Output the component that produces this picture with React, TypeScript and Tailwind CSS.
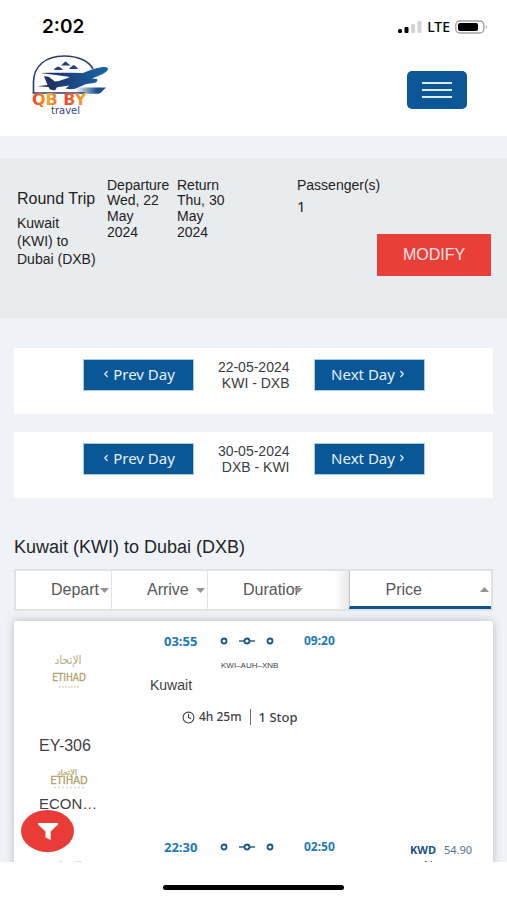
import { ChevronLeft, ChevronRight, Clock } from 'lucide-react'

type LegInfo = {
  id: string
  depart: string
  arrive: string
  price?: string
}

const SHIFTS = [
  { date: '22-05-2024', route: 'KWI - DXB' },
  { date: '30-05-2024', route: 'DXB - KWI' },
]

const LEGS: LegInfo[] = [
  { id: 'out', depart: '03:55', arrive: '09:20' },
  { id: 'back', depart: '22:30', arrive: '02:50', price: '54.90' },
]

function StatusBar() {
  return (
    <div className="flex h-[46px] shrink-0 items-center justify-between pt-2 pr-[19px] pl-[42px]">
      <span className="font-['Inter'] text-[19px] leading-6 font-semibold text-black">2:02</span>
      <div className="flex items-center gap-[5px]">
        <svg width="24" height="14" viewBox="0 0 24 14" aria-hidden="true">
          <rect x="0" y="9" width="4" height="4" rx="1.5" fill="#000" />
          <rect x="6.5" y="7" width="4" height="6" rx="1" fill="#000" />
          <rect x="13" y="4" width="4" height="9" rx="1" fill="#d4d4d4" />
          <rect x="19.5" y="1" width="4" height="12" rx="1" fill="#d4d4d4" />
        </svg>
        <span className="font-['Noto_Sans'] text-sm leading-5 font-medium text-black">LTE</span>
        <svg width="33" height="14" viewBox="0 0 33 14" aria-hidden="true">
          <rect x="0.8" y="1" width="28" height="12" rx="4" fill="#fff" stroke="#a3a3a3" strokeWidth="1.4" />
          <rect x="3" y="3" width="20" height="8" rx="2" fill="#000" />
          <path d="M30.8 5.2c1.6.5 1.6 3.1 0 3.6z" fill="#a3a3a3" />
        </svg>
      </div>
    </div>
  )
}

function BrandLogo() {
  return (
    <svg width="78" height="64" viewBox="0 0 78 64" role="img" aria-label="QB BY travel">
      <defs>
        <linearGradient id="fire" x1="0" y1="0" x2="1" y2="0">
          <stop offset="0" stopColor="#e0452f" />
          <stop offset="0.3" stopColor="#f3a82c" />
          <stop offset="0.6" stopColor="#e2463a" />
          <stop offset="1" stopColor="#f5b32a" />
        </linearGradient>
        <linearGradient id="runway" x1="0" y1="0" x2="1" y2="0">
          <stop offset="0" stopColor="#1c5089" stopOpacity="0" />
          <stop offset="0.7" stopColor="#1c5089" />
        </linearGradient>
        <linearGradient id="plane" x1="0" y1="0" x2="1" y2="0">
          <stop offset="0" stopColor="#23265c" />
          <stop offset="1" stopColor="#1668a8" />
        </linearGradient>
      </defs>
      <path d="M2.500 40V29C2.500 13 15 3 33 3c14 0 25 5 29 13" fill="none" stroke="#2c3b72" strokeWidth="1.6" />
      <path d="M1.700 40H54" stroke="#2c3b72" strokeWidth="1.6" />
      <path d="M46 34.500h29l-5 5-2 1.300H44z" fill="url(#runway)" />
      <path d="M23 17c.5-2 2-2.500 4-3.500 1.800.5 3.500 1.500 5 3.500zM30 12.500c1-1 2.500-2.500 4.500-4 2 1.500 3.500 3 5.500 4zM38 16c1-1.500 2.500-2.500 4.500-4 2 1 3.500 2.500 5 4z" fill="#233e7c" />
      <path
        d="M13 23l5 1 6 4.500c5-.4 10-2.500 15-4.500-9-1.500-19-2.500-30-4 14-.6 29-.3 43 0 6-2.500 11-4.200 17-5.500 4.500-1 8-.4 8 1.200 0 2.500-5 5.300-11 7.800l-5 2 5 .6c1 2-.6 3.800-3 4L55 31l-9 4c-3.500 1.600-8 1.400-11.500.4l4-3-12.500 1.800-2 3.200-5-.8-1.500-2.600-11-.8 10-1.200z"
        fill="url(#plane)"
      />
      <text x="1" y="52" fill="url(#fire)" fontFamily="DejaVu Sans" fontSize="16" fontWeight="700">QB BY</text>
      <text x="20" y="61" fontFamily="DejaVu Sans" fontSize="10" fill="#34487e">travel</text>
    </svg>
  )
}

function EtihadTall() {
  return (
    <svg width="36" height="36" viewBox="0 0 36 36" role="img" aria-label="Etihad Airways">
      <text x="17" y="11" textAnchor="middle" fontFamily="DejaVu Sans Condensed" fontSize="12" fill="#b9ad7c">الإتحاد</text>
      <text x="18" y="28" textAnchor="middle" fontFamily="DejaVu Sans Condensed" fontSize="10" fill="#b0a36c" stroke="#b0a36c" strokeWidth="0.3">ETIHAD</text>
      <path d="M8 34h20" stroke="#ddd8c6" strokeWidth="2" strokeDasharray="1.500 1.500" />
    </svg>
  )
}

function EtihadWide() {
  return (
    <svg width="50" height="20" viewBox="0 0 50 20" role="img" aria-label="Etihad Airways">
      <text x="23" y="6" textAnchor="middle" fontFamily="DejaVu Sans" fontSize="8" fill="#b9ad7c" stroke="#b9ad7c" strokeWidth="0.3">الإتحاد</text>
      <text x="25" y="15" textAnchor="middle" fontFamily="DejaVu Sans" fontSize="10" fill="#b0a36c" stroke="#b0a36c" strokeWidth="0.3">ETIHAD</text>
      <path d="M10 18.500h30" stroke="#ddd8c6" strokeWidth="1.500" strokeDasharray="2 2" />
    </svg>
  )
}

function StopsLine() {
  return (
    <svg width="54" height="8" viewBox="0 0 54 8" fill="#fff" stroke="#1d5384" strokeWidth="1.8" aria-hidden="true">
      <path d="M19 4h16" strokeWidth="1.4" />
      <circle cx="4" cy="4" r="2.500" />
      <circle cx="27" cy="4" r="2.500" />
      <circle cx="50" cy="4" r="2.500" />
    </svg>
  )
}

function TripSummary() {
  return (
    <section className="flex min-h-40 items-start bg-[#e8ecef] pt-5 pr-4 pl-[17px] text-[#1f2224]">
      <div className="w-[90px] shrink-0 pt-3">
        <p className="text-[16px] leading-[18px]">Round Trip</p>
        <p className="mt-1.5 text-[14px] leading-[18px]">Kuwait<br />(KWI) to<br />Dubai (DXB)</p>
      </div>
      <div className="w-[70px] shrink-0 text-[14px]">
        <p className="leading-[14px]">Departure</p>
        <p className="leading-[16px]">Wed, 22<br />May<br />2024</p>
      </div>
      <div className="w-[120px] shrink-0 text-[14px]">
        <p className="leading-[14px]">Return</p>
        <p className="leading-[16px]">Thu, 30<br />May<br />2024</p>
      </div>
      <div className="flex grow flex-col">
        <p className="text-[14px] leading-[14px]">Passenger(s)</p>
        <p className="mt-1 font-['Noto_Sans'] text-[15px] leading-5">1</p>
        <button className="mt-[18px] h-[42px] w-[114px] self-end bg-[#e93f39] text-[16px] text-[#fde4e2]">MODIFY</button>
      </div>
    </section>
  )
}

function DayShift({ date, route }: { date: string; route: string }) {
  const btn = "flex h-8 w-[111px] items-center justify-center gap-0.5 border border-[#a9cbe6] bg-[#095796] pb-0.5 font-['Noto_Sans'] text-[15px] text-[#e6f0f8]"
  return (
    <div className="flex h-[66px] items-start justify-center bg-white pt-[11px]">
      <button className={btn}>
        <ChevronLeft size={10} strokeWidth={3} />
        Prev Day
      </button>
      <p className="mr-6 ml-4 w-20 text-right text-[14px] leading-4 text-[#3a3d40]">
        {date}
        <br />
        {route}
      </p>
      <button className={btn}>
        Next Day
        <ChevronRight size={10} strokeWidth={3} />
      </button>
    </div>
  )
}

function Caret({ up = false }: { up?: boolean }) {
  return (
    <svg width="9" height="5" viewBox="0 0 9 5" fill="#949494" aria-hidden="true">
      {up ? <path d="M0 5 4.500 0 9 5z" /> : <path d="M0 0h9L4.500 5z" />}
    </svg>
  )
}

function SortTabs() {
  const tab = 'relative flex h-full items-center text-[16px] text-[#56585a]'
  return (
    <div className="mt-[11px] grid h-[42px] grid-cols-[97fr_97fr_143fr_143fr] border-2 border-[#dfe1e2] bg-white">
      <button className={`${tab} border-r border-[#e4e4e4] pl-[35px]`}>
        Depart
        <span className="absolute right-0.5"><Caret /></span>
      </button>
      <button className={`${tab} border-r border-[#e4e4e4] pl-[35px]`}>
        Arrive
        <span className="absolute right-0.5"><Caret /></span>
      </button>
      <button className={`${tab} bg-linear-to-r from-white from-90% to-[#e9e9e9] pl-[35px]`}>
        <span className="w-[57px] overflow-hidden text-left">Duration</span>
        <span className="absolute right-[46px]"><Caret /></span>
      </button>
      <button className={`${tab} border-b-[3px] border-l border-b-[#0d5590] border-l-[#bfc2c4] pt-0.5 pl-[35px]`}>
        Price
        <span className="absolute right-0.5"><Caret up /></span>
      </button>
    </div>
  )
}

function Leg({ leg }: { leg: LegInfo }) {
  return (
    <article className="flex items-start text-[#3f4245]">
      <div className="w-[136px] shrink-0 pt-8 pb-[13px] pl-[25px]">
        <div className="flex w-[60px] justify-center"><EtihadTall /></div>
        <p className="mt-[47px] text-[16px] leading-5">EY-306</p>
        <div className="mt-[13px] flex w-[60px] justify-center"><EtihadWide /></div>
        <p className="mt-[5px] w-[60px] truncate text-[15px] leading-5">ECONOMY</p>
      </div>
      <div className="w-[230px] shrink-0 pt-3">
        <div className="flex items-center pl-[14px] font-['Noto_Sans'] text-[13px] leading-4 font-bold text-[#2179b5]">
          <span className="w-14">{leg.depart}</span>
          <StopsLine />
          <span className="ml-[30px] text-[12px]">{leg.arrive}</span>
        </div>
        <p className="mt-3 pl-[71px] text-[8px] leading-[10px]">KWI–AUH–XNB</p>
        <p className="mt-1 text-[14px] leading-5">Kuwait</p>
        <div className="mt-3.5 flex items-center pl-8 font-['Noto_Sans'] text-[12px] leading-4 font-medium">
          <Clock size={13} className="mr-1" />
          <span>4h 25m</span>
          <span className="ml-2 border-l border-[#6b6e70] pl-2 text-[13px]">1 Stop</span>
        </div>
      </div>
      {leg.price && (
        <div className="pt-[15px] pl-[30px]">
          <p className="flex gap-2 font-['Noto_Sans'] text-[11px] leading-4">
            <span className="font-bold text-[#1c5086]">KWD</span>
            <span className="text-[#56728a]">{leg.price}</span>
          </p>
          <p className="pl-[14px] text-[12px] leading-4">N</p>
        </div>
      )}
    </article>
  )
}

export default function App() {
  return (
    <div className="flex h-screen flex-col bg-white font-['Liberation_Sans',sans-serif]">
      <StatusBar />
      <header className="flex h-[90px] shrink-0 items-start justify-between pt-[7px] pr-10 pl-[31px]">
        <BrandLogo />
        <button aria-label="Menu" className="mt-[18px] flex h-[38px] w-[60px] flex-col items-center justify-center gap-[5px] rounded-[5px] bg-[#0b5798]">
          <span className="h-0.5 w-[30px] bg-[#dcebf6]" />
          <span className="h-0.5 w-[30px] bg-[#dcebf6]" />
          <span className="h-0.5 w-[30px] bg-[#dcebf6]" />
        </button>
      </header>
      <main className="relative min-h-0 grow overflow-hidden bg-[#eff3f8] pt-[22px]">
        <TripSummary />
        <div className="px-3.5 pt-[30px]">
          <div className="flex flex-col gap-[18px]">
            {SHIFTS.map(s => (
              <DayShift key={s.date} date={s.date} route={s.route} />
            ))}
          </div>
          <h1 className="mt-[38px] text-[18px] leading-[22px] text-[#222527]">Kuwait (KWI) to Dubai (DXB)</h1>
          <SortTabs />
          <div className="mt-2.5 rounded-t-[3px] bg-white shadow-[0_0_10px_#b9bec2]">
            {LEGS.map(l => (
              <Leg key={l.id} leg={l} />
            ))}
          </div>
        </div>
        <button aria-label="Filter" className="absolute bottom-2.5 left-[21px] flex h-[42px] w-[53px] items-center justify-center rounded-[50%] bg-[#e93b37]">
          <svg width="20" height="17" viewBox="0 0 20 17" fill="#fff" aria-hidden="true">
            <path d="M0 0h20v1.500L12.700 8.500V17L7.500 14.500V8.500L0 1.500z" />
          </svg>
        </button>
      </main>
      <div className="flex h-[38px] shrink-0 items-start justify-center pt-[23px]">
        <div className="h-[5px] w-[181px] rounded-full bg-black" />
      </div>
    </div>
  )
}
